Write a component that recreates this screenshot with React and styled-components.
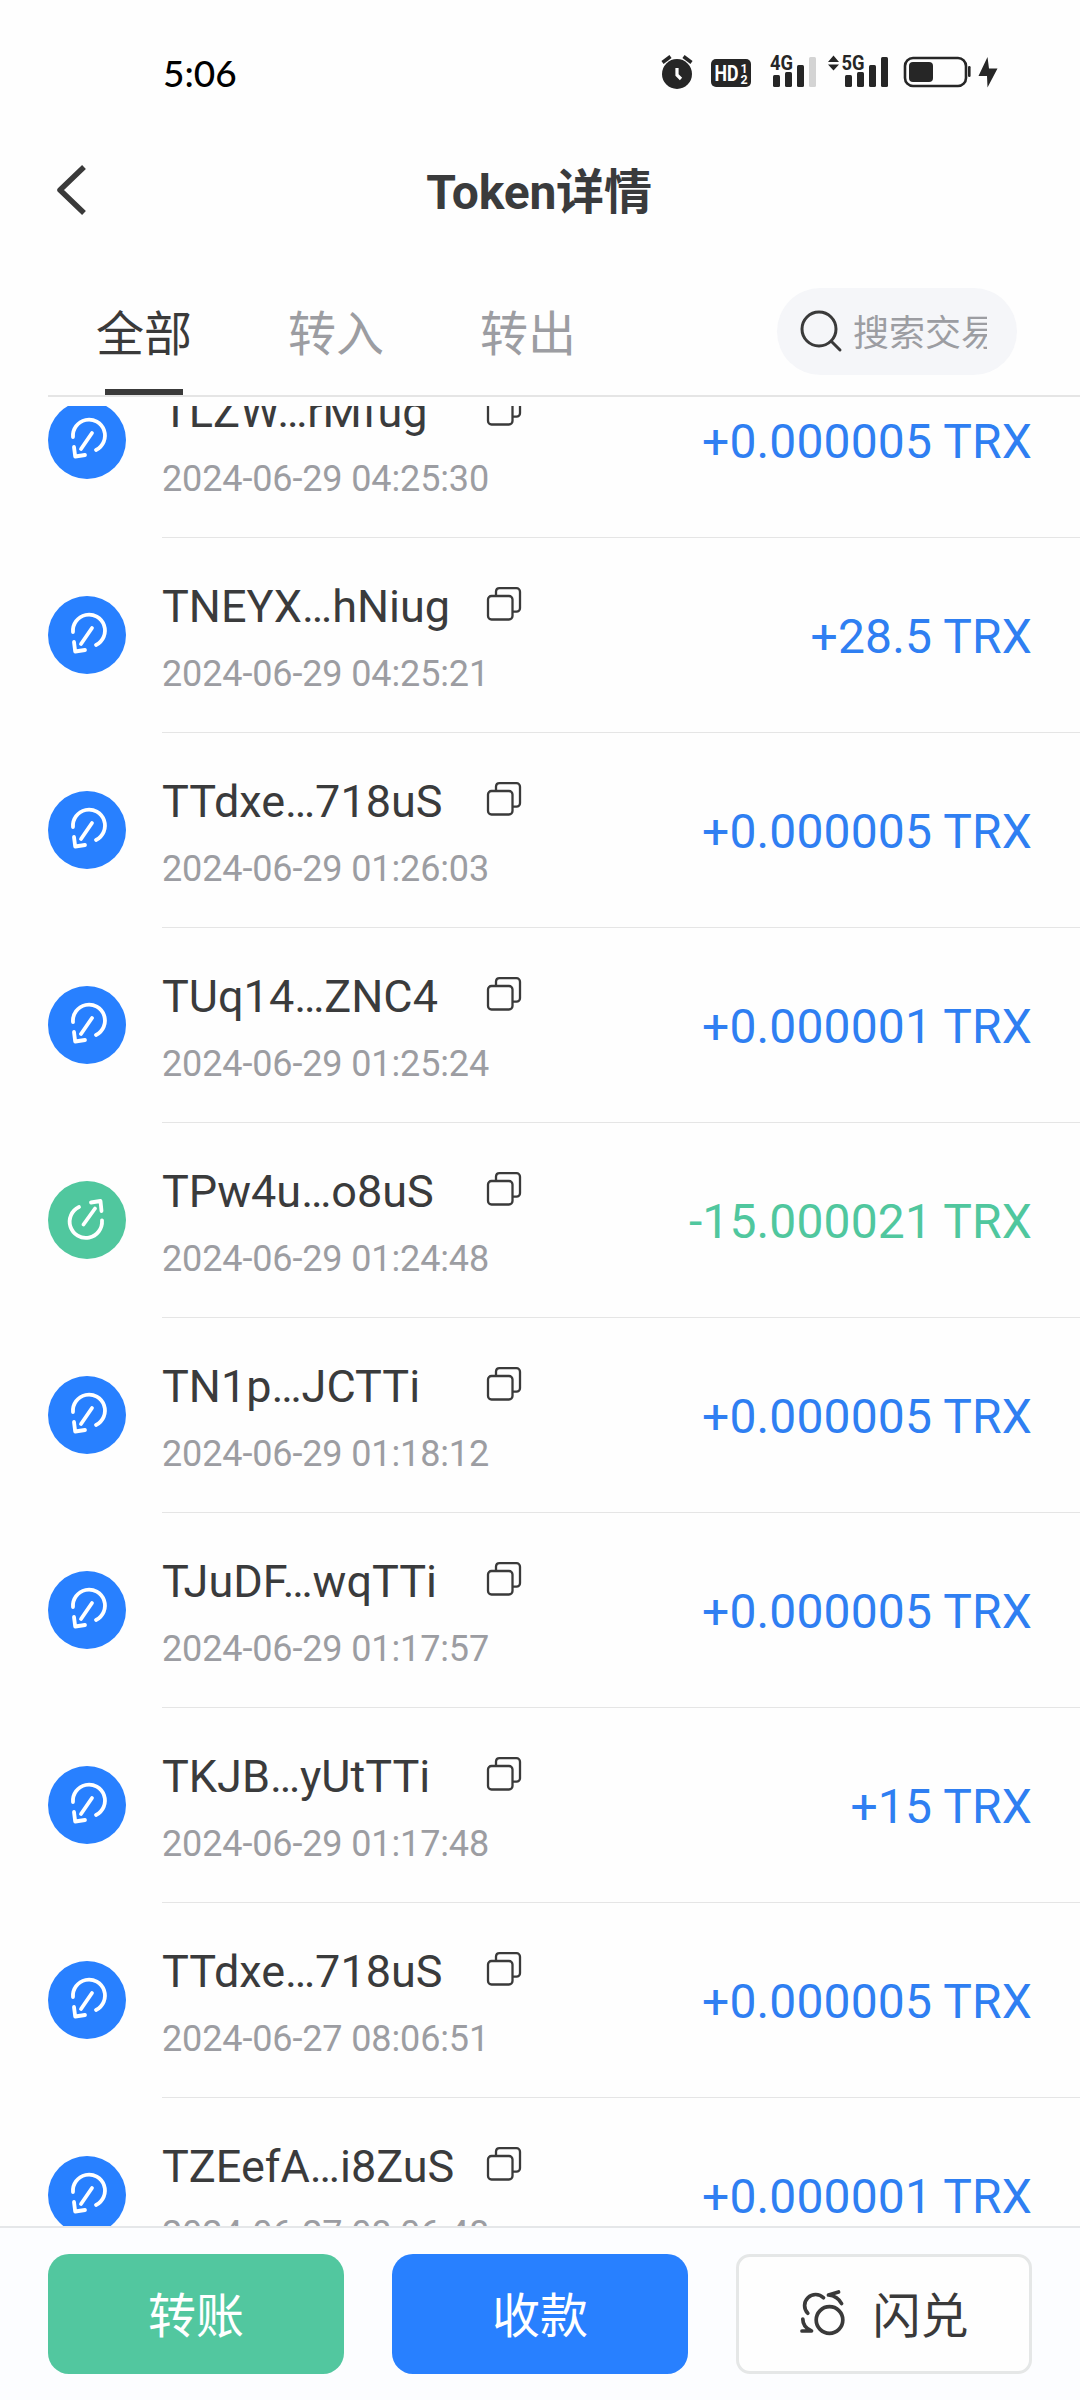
import React from "react";
import styled, { createGlobalStyle } from "styled-components";

const GlobalStyle = createGlobalStyle`
  * {
    box-sizing: border-box;
  }
  body {
    margin: 0;
    background: #fefefe;
    font-family: Roboto, "Noto Sans CJK SC", sans-serif;
    color: #3a3b3c;
  }
`

const Screen = styled.div`
  width: 1080px;
  height: 2400px;
  display: flex;
  flex-direction: column;
  overflow: hidden;
`

const StatusBar = styled.div`
  height: 144px;
  flex: none;
  padding: 0 82px 0 163px;
  display: flex;
  justify-content: space-between;
  align-items: center;
`

const Clock = styled.div`
  font-family: Lato, sans-serif;
  font-size: 37px;
  font-weight: 500;
  color: #000;
`

const TitleBar = styled.div`
  height: 94px;
  flex: none;
  padding: 0 49px 0 47px;
  display: grid;
  grid-template-columns: 1fr auto 1fr;
  align-items: center;
`

const BackIcon = styled.svg`
  display: block;
  margin: 0 0 3px 7px;
`

const Title = styled.h1`
  margin: 0;
  padding-top: 4px;
  font-size: 48px;
  font-weight: 700;
  line-height: 70px;
  letter-spacing: -0.2px;
`

const FilterBar = styled.div`
  height: 159px;
  flex: none;
  margin-left: 48px;
  padding-right: 63px;
  display: flex;
  justify-content: space-between;
  border-bottom: 2px solid #e5e5e5;
`

const Tabs = styled.div`
  display: flex;
`

const Tab = styled.div`
  width: 192px;
  padding-top: 62px;
  display: flex;
  flex-direction: column;
  justify-content: space-between;
  align-items: center;
  font-size: 48px;
  line-height: 70px;
  color: ${(props) => (props.$active ? "#3a3a3a" : "#9c9da2")};
`

const TabLine = styled.div`
  width: 78px;
  height: 6px;
  background: ${(props) => (props.$active ? "#3a3a3a" : "transparent")};
`

const SearchBox = styled.div`
  width: 240px;
  height: 87px;
  margin-top: 50px;
  padding: 0 30px 0 22px;
  display: flex;
  align-items: center;
  gap: 9px;
  border-radius: 44px;
  background: #f5f6f9;
`

const SearchHint = styled.div`
  flex: 1;
  padding-top: 4px;
  overflow: hidden;
  white-space: nowrap;
  font-size: 36px;
  line-height: 54px;
  color: #9c9da2;
`

const List = styled.div`
  flex: 1;
  min-height: 0;
  margin-top: 9px;
  overflow: hidden;
  display: flex;
  flex-direction: column;
  justify-content: flex-start;
`

const Row = styled.div`
  height: 195px;
  flex: none;
  padding-left: 48px;
  display: flex;
  align-items: center;
  gap: 36px;

  /* the list is scrolled part way into its first row */
  &:first-child {
    margin-top: -63px;
  }
`

const RowIcon = styled.svg`
  flex: none;
  margin-bottom: 1px;
`

const RowBody = styled.div`
  flex: 1;
  height: 195px;
  padding-right: 48px;
  display: flex;
  justify-content: space-between;
  align-items: center;
  border-bottom: 1px solid #e5e5e5;
`

const Info = styled.div`
  width: 360px;
  margin-top: 5px;
`

const AddressLine = styled.div`
  display: flex;
  justify-content: space-between;
  align-items: center;
  font-size: 45px;
  line-height: 60px;
`

const CopyIcon = styled.svg`
  display: block;
  margin-top: -4px;
`

const Time = styled.div`
  margin-top: 13px;
  font-size: 36px;
  line-height: 48px;
  letter-spacing: -0.13px;
  color: #9c9da2;
`

const Amount = styled.div`
  margin-top: 3px;
  font-size: 48px;
  line-height: 60px;
  letter-spacing: 0.15px;
  color: ${(props) => (props.$out ? "#50c79e" : "#2f7ff2")};
`

const Footer = styled.div`
  height: 174px;
  flex: none;
  padding: 26px 48px;
  display: flex;
  gap: 48px;
  border-top: 2px solid #e5e7e9;
  background: #fcfdff;
`

const Button = styled.button`
  width: 296px;
  height: 120px;
  padding: 5px 0 0;
  display: flex;
  justify-content: center;
  align-items: center;
  gap: 27px;
  border: ${(props) => (props.$outline ? "3px solid #e5e7e7" : "none")};
  border-radius: ${(props) => (props.$outline ? 14 : 21)}px;
  background: ${(props) => props.$bg};
  color: ${(props) => (props.$outline ? "#3a3a3a" : "#fff")};
  font-family: inherit;
  font-size: 48px;
  line-height: 70px;
`

const ButtonIcon = styled.svg`
  flex: none;
  margin-bottom: 7px;
`

const transactions = [
  { address: "TLZW…rMfug", time: "2024-06-29 04:25:30", amount: "+0.000005 TRX" },
  { address: "TNEYX…hNiug", time: "2024-06-29 04:25:21", amount: "+28.5 TRX" },
  { address: "TTdxe…718uS", time: "2024-06-29 01:26:03", amount: "+0.000005 TRX" },
  { address: "TUq14…ZNC4", time: "2024-06-29 01:25:24", amount: "+0.000001 TRX" },
  { address: "TPw4u…o8uS", time: "2024-06-29 01:24:48", amount: "-15.000021 TRX", out: true },
  { address: "TN1p…JCTTi", time: "2024-06-29 01:18:12", amount: "+0.000005 TRX" },
  { address: "TJuDF…wqTTi", time: "2024-06-29 01:17:57", amount: "+0.000005 TRX" },
  { address: "TKJB…yUtTTi", time: "2024-06-29 01:17:48", amount: "+15 TRX" },
  { address: "TTdxe…718uS", time: "2024-06-27 08:06:51", amount: "+0.000005 TRX" },
  { address: "TZEefA…i8ZuS", time: "2024-06-27 08:06:48", amount: "+0.000001 TRX" },
]

const tabs = ["全部", "转入", "转出"]

const StatusIcons = () => (
  <svg width="340" height="40" viewBox="658 52 340 40" fill="#262626">
    {/* alarm */}
    <circle cx="677" cy="74" r="15" />
    <path d="M662.500 62.500l8-6M691.500 62.500l-8-6" stroke="#262626" strokeWidth="3.600" fill="none" />
    <path d="M677 68v7l4 4" stroke="#fff" strokeWidth="3.200" fill="none" />
    {/* HD */}
    <rect x="711" y="59" width="40" height="28" rx="5" />
    <g fill="#fff" fontFamily="Roboto, sans-serif" fontWeight="700">
      <text x="714.500" y="81" fontSize="22.500" textLength="24" lengthAdjust="spacingAndGlyphs">HD</text>
      <text x="740.500" y="72.500" fontSize="12.500">1</text>
      <text x="740.500" y="84" fontSize="12.500">2</text>
    </g>
    {/* network labels */}
    <g fontFamily="Roboto, sans-serif" fontWeight="700" fontSize="20">
      <text x="770" y="70" textLength="23" lengthAdjust="spacingAndGlyphs">4G</text>
      <text x="841.500" y="70" textLength="23" lengthAdjust="spacingAndGlyphs">5G</text>
    </g>
    <rect x="773" y="75" width="7" height="12" rx="1.500" />
    <rect x="785" y="72" width="7" height="15" rx="1.500" />
    <rect x="797" y="65" width="7" height="22" rx="1.500" />
    <rect x="809" y="57" width="7" height="30" rx="1.500" fill="#d4d4d4" />
    <path d="M828 62l5.500-6.500 5.500 6.500zM828 64.500l5.500 6 5.500-6z" />
    <rect x="845" y="75" width="7" height="12" rx="1.500" />
    <rect x="857" y="72" width="7" height="15" rx="1.500" />
    <rect x="869" y="65" width="7" height="22" rx="1.500" />
    <rect x="881" y="57" width="7" height="30" rx="1.500" />
    {/* battery */}
    <rect x="905" y="58" width="61" height="28" rx="8" fill="none" stroke="#262626" strokeWidth="2.600" />
    <rect x="909" y="62" width="24" height="20" rx="4" />
    <rect x="968" y="66" width="2.600" height="11" rx="1.200" />
    <path d="M987.500 57L978.500 76h8.500L987.500 87.500 997.500 68.500h-8.500z" />
  </svg>
)

const InIcon = () => (
  <RowIcon width="78" height="78" viewBox="0 0 78 78">
    <circle cx="39" cy="39" r="39" fill="#2880ff" />
    <g fill="none" stroke="#fff" strokeWidth="3.800" strokeLinecap="round" strokeLinejoin="round">
      <path d="M25 36a16 16 0 1 1 23 13" />
      <path d="M44 32L33 48" />
      <path d="M26 46l1.200 9.500 9.800-1.500" />
    </g>
  </RowIcon>
)

const OutIcon = () => (
  <RowIcon width="78" height="78" viewBox="0 0 78 78">
    <circle cx="39" cy="39" r="39" fill="#50c79e" />
    <g fill="none" stroke="#fff" strokeWidth="3.800" strokeLinecap="round" strokeLinejoin="round">
      <path d="M31 26a16.200 16.200 0 1 0 23 13.500" />
      <path d="M35.500 43.500L47 27.500" />
      <path d="M43 21.500l9.500-1.500 1 10" />
    </g>
  </RowIcon>
)

const Copy = () => (
  <CopyIcon width="36" height="36" viewBox="0 0 36 36" fill="none" stroke="#3a3a3a" strokeWidth="2.300">
    <rect x="2" y="9" width="24.500" height="23.500" rx="3.500" />
    <path d="M10 9V4.500A3.500 3.500 0 0 1 13.500 1.200h17A3.500 3.500 0 0 1 34 4.700v16.500a3.500 3.500 0 0 1-3.500 3.500H26.500" />
  </CopyIcon>
)

const SwapIcon = () => (
  <ButtonIcon width="46" height="46" viewBox="0 0 46 46" fill="none" stroke="#3a3a3a" strokeWidth="3.700" strokeLinecap="round" strokeLinejoin="round">
    <circle cx="30.500" cy="30" r="13.300" />
    <path d="M8.800 23.300A11 11 0 0 1 24.500 7.800" />
    <path d="M42.500 13.500C40.500 9.500 37.500 6 29.500 5l10-3" />
    <path d="M3.800 29c0 5 1.700 9 8.700 12H3" />
  </ButtonIcon>
)

const TransactionRow = ({ item }) => (
  <Row>
    {item.out ? <OutIcon /> : <InIcon />}
    <RowBody>
      <Info>
        <AddressLine>
          {item.address}
          <Copy />
        </AddressLine>
        <Time>{item.time}</Time>
      </Info>
      <Amount $out={item.out}>{item.amount}</Amount>
    </RowBody>
  </Row>
)

const App = () => {
  return (
    <Screen>
      <GlobalStyle />
      <StatusBar>
        <Clock>5:06</Clock>
        <StatusIcons />
      </StatusBar>
      <TitleBar>
        <BackIcon width="32" height="50" viewBox="0 0 32 50" fill="none" stroke="#3a3a3a" strokeWidth="5.500" strokeLinejoin="round">
          <path d="M30 2L6 25l24 23" />
        </BackIcon>
        <Title>Token详情</Title>
      </TitleBar>
      <FilterBar>
        <Tabs>
          {tabs.map((name, i) => (
            <Tab key={name} $active={i === 0}>
              {name}
              <TabLine $active={i === 0} />
            </Tab>
          ))}
        </Tabs>
        <SearchBox>
          <svg width="45" height="45" viewBox="0 0 45 45" fill="none" stroke="#3a3a3a" strokeWidth="3" strokeLinecap="round">
            <circle cx="20" cy="20" r="17" />
            <path d="M32.500 32.500l8.500 8.500" />
          </svg>
          <SearchHint>搜索交易</SearchHint>
        </SearchBox>
      </FilterBar>
      <List>
        {transactions.map((item, i) => (
          <TransactionRow key={i} item={item} />
        ))}
      </List>
      <Footer>
        <Button $bg="#52c79f">转账</Button>
        <Button $bg="#2880ff">收款</Button>
        <Button $bg="#fefefe" $outline>
          <SwapIcon />
          闪兑
        </Button>
      </Footer>
    </Screen>
  );
}

export default App;
